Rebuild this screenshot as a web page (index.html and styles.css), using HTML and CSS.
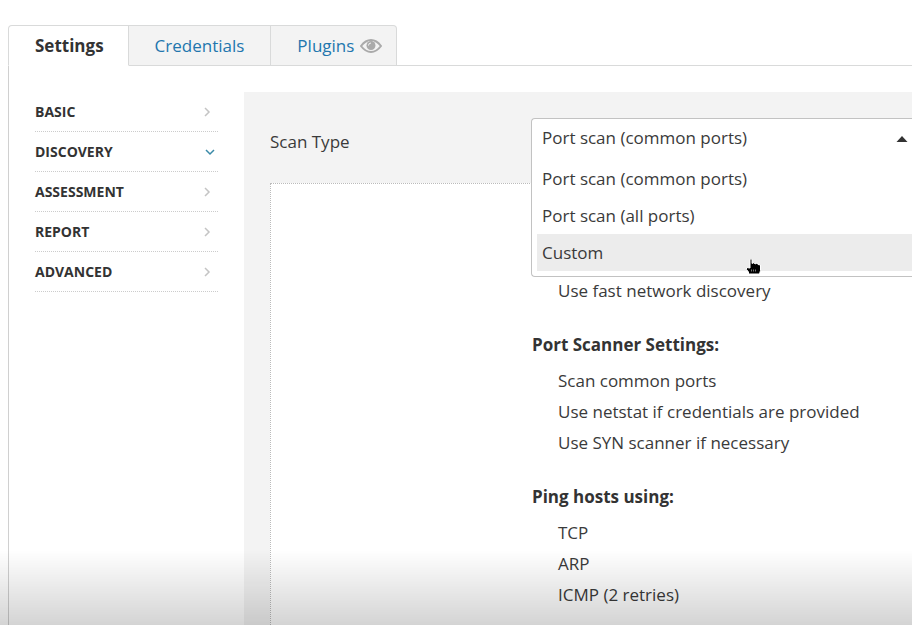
FILE: index.html
```html
<!DOCTYPE html>
<html lang="en">
<head>
<meta charset="utf-8">
<title>Scan settings</title>
<link rel="stylesheet" href="styles.css">
</head>
<body>
<nav class="tabs" aria-label="Scan configuration">
  <a class="tab tab-active" href="#settings">Settings</a>
  <a class="tab" href="#credentials">Credentials</a>
  <a class="tab" href="#plugins">Plugins
    <svg class="eye" viewBox="0 0 22 14" aria-hidden="true"><path class="eye-lid" d="M1 7Q5.500 1 11 1T21 7Q16.500 13 11 13T1 7Z"/><circle class="eye-iris" cx="11" cy="6.500" r="4.500"/><path class="eye-glint" d="M8.500 6.500Q8.500 4 11 4"/></svg>
  </a>
</nav>
<main class="panel">
  <nav class="sections" aria-label="Settings sections">
    <button class="section" type="button">BASIC<svg class="chevron" viewBox="0 0 10 10" aria-hidden="true"><path d="M3 1L7 5L3 9"/></svg></button>
    <button class="section" type="button">DISCOVERY<svg class="chevron chevron-open" viewBox="0 0 10 10" aria-hidden="true"><path d="M1 3L5 7L9 3"/></svg></button>
    <button class="section" type="button">ASSESSMENT<svg class="chevron" viewBox="0 0 10 10" aria-hidden="true"><path d="M3 1L7 5L3 9"/></svg></button>
    <button class="section" type="button">REPORT<svg class="chevron" viewBox="0 0 10 10" aria-hidden="true"><path d="M3 1L7 5L3 9"/></svg></button>
    <button class="section" type="button">ADVANCED<svg class="chevron" viewBox="0 0 10 10" aria-hidden="true"><path d="M3 1L7 5L3 9"/></svg></button>
  </nav>
  <section class="content">
    <div class="field">
      <label class="field-label" for="scan-type">Scan Type</label>
      <div class="field-control">
        <div class="dropdown">
          <div class="dropdown-head">
            <select class="dropdown-select" id="scan-type">
              <option>Port scan (common ports)</option>
              <option>Port scan (all ports)</option>
              <option>Custom</option>
            </select>
            <svg class="dropdown-arrow" viewBox="0 0 12 6" aria-hidden="true"><path d="M0.500 6L6 0L11.500 6Z"/></svg>
          </div>
          <ul class="options" role="listbox" aria-label="Scan Type options">
            <li class="option" role="option" aria-selected="true">Port scan (common ports)</li>
            <li class="option" role="option" aria-selected="false">Port scan (all ports)</li>
            <li class="option option-hover" role="option" aria-selected="false">Custom
              <svg class="pointer" viewBox="0 0 16 17" aria-hidden="true"><path class="pointer-edge" d="M4 1.500Q5 0 6 1.500V5.500L8 4.500L9 6L11 5L12 6.500L14.500 7V12.500L13.500 16H2.500V14L0.500 11.500V9.500L4 10Z"/><path class="pointer-knuckles" d="M5.500 11.500v2M7.500 11.500v2M9.500 11.500v2"/></svg>
            </li>
          </ul>
        </div>
      </div>
    </div>
    <div class="summary">
      <ul class="items">
        <li>Use fast network discovery</li>
      </ul>
      <h2 class="heading">Port Scanner Settings:</h2>
      <ul class="items">
        <li>Scan common ports</li>
        <li>Use netstat if credentials are provided</li>
        <li>Use SYN scanner if necessary</li>
      </ul>
      <h2 class="heading">Ping hosts using:</h2>
      <ul class="items">
        <li>TCP</li>
        <li>ARP</li>
        <li>ICMP (2 retries)</li>
      </ul>
    </div>
  </section>
</main>
<div class="shade"></div>
</body>
</html>
```
FILE: styles.css
```css
* {
  box-sizing: border-box;
}

body {
  display: flex;
  flex-direction: column;
  min-height: 100vh;
  margin: 0;
  padding: 25px 0 0 8px;
  background: #fff;
  color: #3a3a3a;
  font: 17px/24px "Open Sans", sans-serif;
}

ul {
  margin: 0;
  padding: 0;
  list-style: none;
}

.tabs {
  display: flex;
}

.tabs::after {
  content: "";
  flex: 1;
  border-bottom: 1px solid #d9dada;
}

.tab {
  display: flex;
  align-items: center;
  gap: 6px;
  height: 41px;
  padding: 0 26px;
  border: 1px solid #d9dada;
  border-left-width: 0;
  background: #f3f3f3;
  color: #2276ae;
  text-decoration: none;
}

.tab:last-child {
  padding-right: 14px;
  border-top-right-radius: 4px;
}

.tab-active {
  padding-right: 24px;
  border-left-width: 1px;
  border-bottom-color: #fff;
  border-top-left-radius: 4px;
  background: #fff;
  color: #333;
  font-weight: 700;
}

.eye {
  width: 22px;
  height: 14px;
}

.eye-lid {
  fill: #f3f3f3;
  stroke: #aaa;
  stroke-width: 2;
}

.eye-iris {
  fill: #aaa;
}

.eye-glint {
  fill: none;
  stroke: #f3f3f3;
  stroke-width: 1;
}

.panel {
  display: flex;
  flex: 1;
  gap: 26px;
  padding: 26px 0 0 26px;
  border-left: 1px solid #d0d0d0;
}

.sections {
  flex: none;
  width: 183px;
}

.section {
  display: flex;
  align-items: center;
  justify-content: space-between;
  width: 100%;
  height: 40px;
  padding: 0 6px 0 0;
  border: 0;
  border-bottom: 1px dotted #ccc;
  background: none;
  color: #333;
  font: 700 14px/20px "Open Sans", sans-serif;
}

.chevron {
  width: 10px;
  height: 10px;
  fill: none;
  stroke: #c4c4c4;
  stroke-width: 1.5;
}

.chevron-open {
  margin-right: -3px;
  stroke: #3a8aa8;
}

.content {
  display: flex;
  flex: 1;
  flex-direction: column;
  padding: 26px 0 0 26px;
  background: #f3f3f3;
}

.field {
  display: grid;
  grid-template-columns: 261px 1fr;
  height: 65px;
}

.field-label {
  line-height: 48px;
}

.field-control {
  position: relative;
}

.dropdown {
  position: absolute;
  top: 0;
  right: 0;
  left: 0;
  padding: 0 0 5px 5px;
  border: 1px solid #c2c2c2;
  border-right: 0;
  border-radius: 4px 0 0 4px;
  background: #fff;
}

.dropdown-head {
  display: flex;
  align-items: center;
  height: 41px;
  padding: 0 4px 2px 0;
}

.dropdown-select {
  flex: 1;
  align-self: flex-start;
  height: 37px;
  padding: 0 0 0 5px;
  border: 0;
  background: none;
  color: inherit;
  font: inherit;
  appearance: none;
}

.dropdown-arrow {
  width: 12px;
  height: 6px;
  fill: #333;
}

.option {
  position: relative;
  padding-left: 5px;
  line-height: 37px;
}

.option-hover {
  background: #ececec;
}

.pointer {
  position: absolute;
  top: 24px;
  left: 209px;
  width: 16px;
  height: 17px;
}

.pointer-edge {
  fill: #000;
  stroke: #fff;
  stroke-width: 1;
}

.pointer-knuckles {
  stroke: #777;
  stroke-width: 1;
}

.summary {
  flex: 1;
  padding: 91px 0 14px 261px;
  border: 1px dotted #bbb;
  border-width: 1px 0 0 1px;
  background: #fff;
}

.items {
  padding-left: 26px;
  line-height: 31px;
}

.heading {
  margin: 23px 0 5px;
  color: #333;
  font-size: 17px;
  line-height: 31px;
}

.shade {
  position: fixed;
  right: 0;
  bottom: 0;
  left: 0;
  height: 75px;
  background: linear-gradient(rgba(0, 0, 0, 0), rgba(0, 0, 0, 0.17));
  pointer-events: none;
}
```
